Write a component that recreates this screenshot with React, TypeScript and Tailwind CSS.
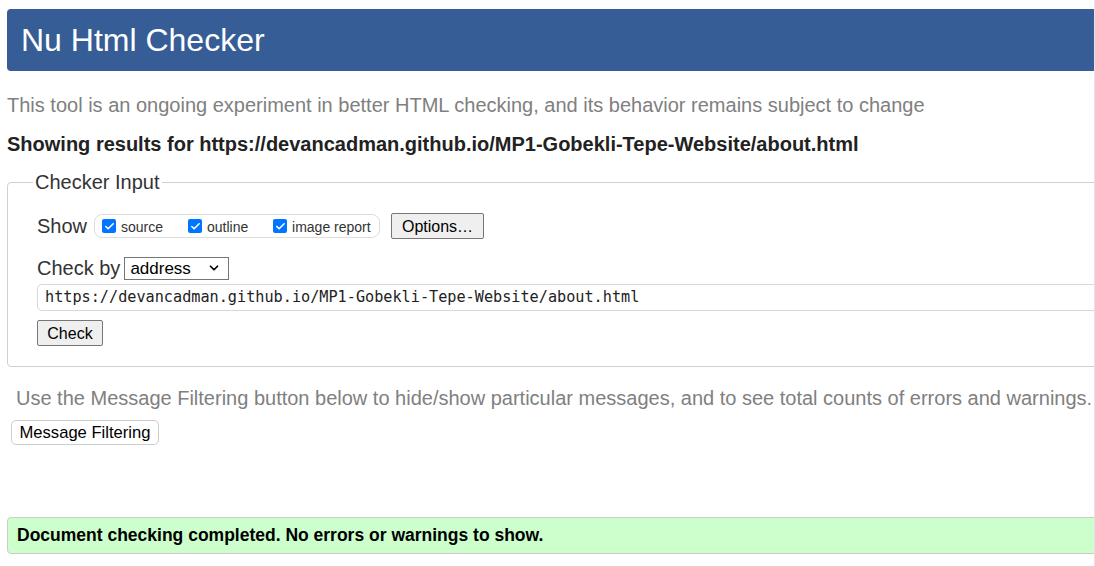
import { Check, ChevronDown } from 'lucide-react';

const Checkbox = ({ label, className = '' }: { label: string; className?: string }) => (
  <label className={`flex items-center ${className}`}>
    <span className="flex h-[14px] w-[14px] items-center justify-center rounded-[2px] bg-[#0075ff]">
      <Check size={11} strokeWidth={3.5} className="text-white" />
    </span>
    <span className="ml-[5px] mt-[3px] text-[14px] text-[#333]">{label}</span>
  </label>
);

const Button = ({ children, className = '' }: { children: React.ReactNode; className?: string }) => (
  <button
    className={`rounded-[2px] border border-[#767676] bg-[#efefef] px-[9px] text-[16px] leading-[23px] text-black ${className}`}
  >
    {children}
  </button>
);

export default function App() {
  return (
    <div
      className="h-[566px] w-[1095px] overflow-hidden border-r border-[#e3e3e3] bg-white"
      style={{ fontFamily: '"Liberation Sans", Arial, sans-serif' }}
    >
      <div className="w-[1200px] pl-[7px] pt-[9px]">
        <h1 className="flex h-[62px] items-center rounded-[4px] bg-[#365d96] pl-[14px] text-[32px] text-white">
          Nu Html Checker
        </h1>

        <p className="mt-[23px] text-[20px] leading-[22px] text-[#808080]">
          This tool is an ongoing experiment in better HTML checking, and its behavior remains subject to change
        </p>

        <p className="mt-[17px] text-[20px] font-bold leading-[22px] text-[#222]">
          Showing results for https://devancadman.github.io/MP1-Gobekli-Tepe-Website/about.html
        </p>

        <fieldset className="mt-[16px] h-[196px] rounded-[4px] border border-[#d0d0d0] pl-[29px] pr-0">
          <legend className="-ml-[4px] px-[2px] text-[20px] leading-[22px] text-[#333]">Checker Input</legend>

          <div className="mt-[18px] flex items-center">
            <span className="text-[20px] text-[#333]">Show</span>
            <div className="ml-[7px] flex h-[24px] w-[286px] items-center rounded-[8px] border border-[#ddd] pl-[7px]">
              <Checkbox label="source" className="w-[86px]" />
              <Checkbox label="outline" className="w-[85px]" />
              <Checkbox label="image report" />
            </div>
            <Button className="ml-[11px] h-[26px] w-[93px]">Options…</Button>
          </div>

          <div className="mt-[12px] flex items-center">
            <span className="text-[20px] text-[#333]">Check by</span>
            <div className="ml-[4px] flex h-[23px] w-[105px] items-center justify-between border border-[#767676] pl-[5px] pr-[7px]">
              <span className="text-[17px] leading-none text-black">address</span>
              <ChevronDown size={14} strokeWidth={3} className="text-black" />
            </div>
          </div>

          <div className="mt-[1px] flex h-[27px] items-center rounded-[5px] border border-[#d8d8d8] pl-[7px]">
            <span className="text-[15.2px] text-[#222]" style={{ fontFamily: '"DejaVu Sans Mono", monospace' }}>
              https://devancadman.github.io/MP1-Gobekli-Tepe-Website/about.html
            </span>
          </div>

          <Button className="mt-[9px] h-[26px] w-[66px]">Check</Button>
        </fieldset>

        <p className="ml-[9px] mt-[20px] text-[20px] leading-[22px] text-[#808080]">
          Use the Message Filtering button below to hide/show particular messages, and to see total counts of errors and warnings.
        </p>

        <button className="ml-[4px] mt-[11px] h-[25px] w-[148px] rounded-[5px] border border-[#ccc] bg-white text-[16.6px] text-black">
          Message Filtering
        </button>

        <div className="mt-[72px] flex h-[37px] items-center rounded-[4px] border border-[#ccc] bg-[#ccffcc] pl-[9px] text-[17.5px] font-bold text-black">
          Document checking completed. No errors or warnings to show.
        </div>
      </div>
    </div>
  );
}
